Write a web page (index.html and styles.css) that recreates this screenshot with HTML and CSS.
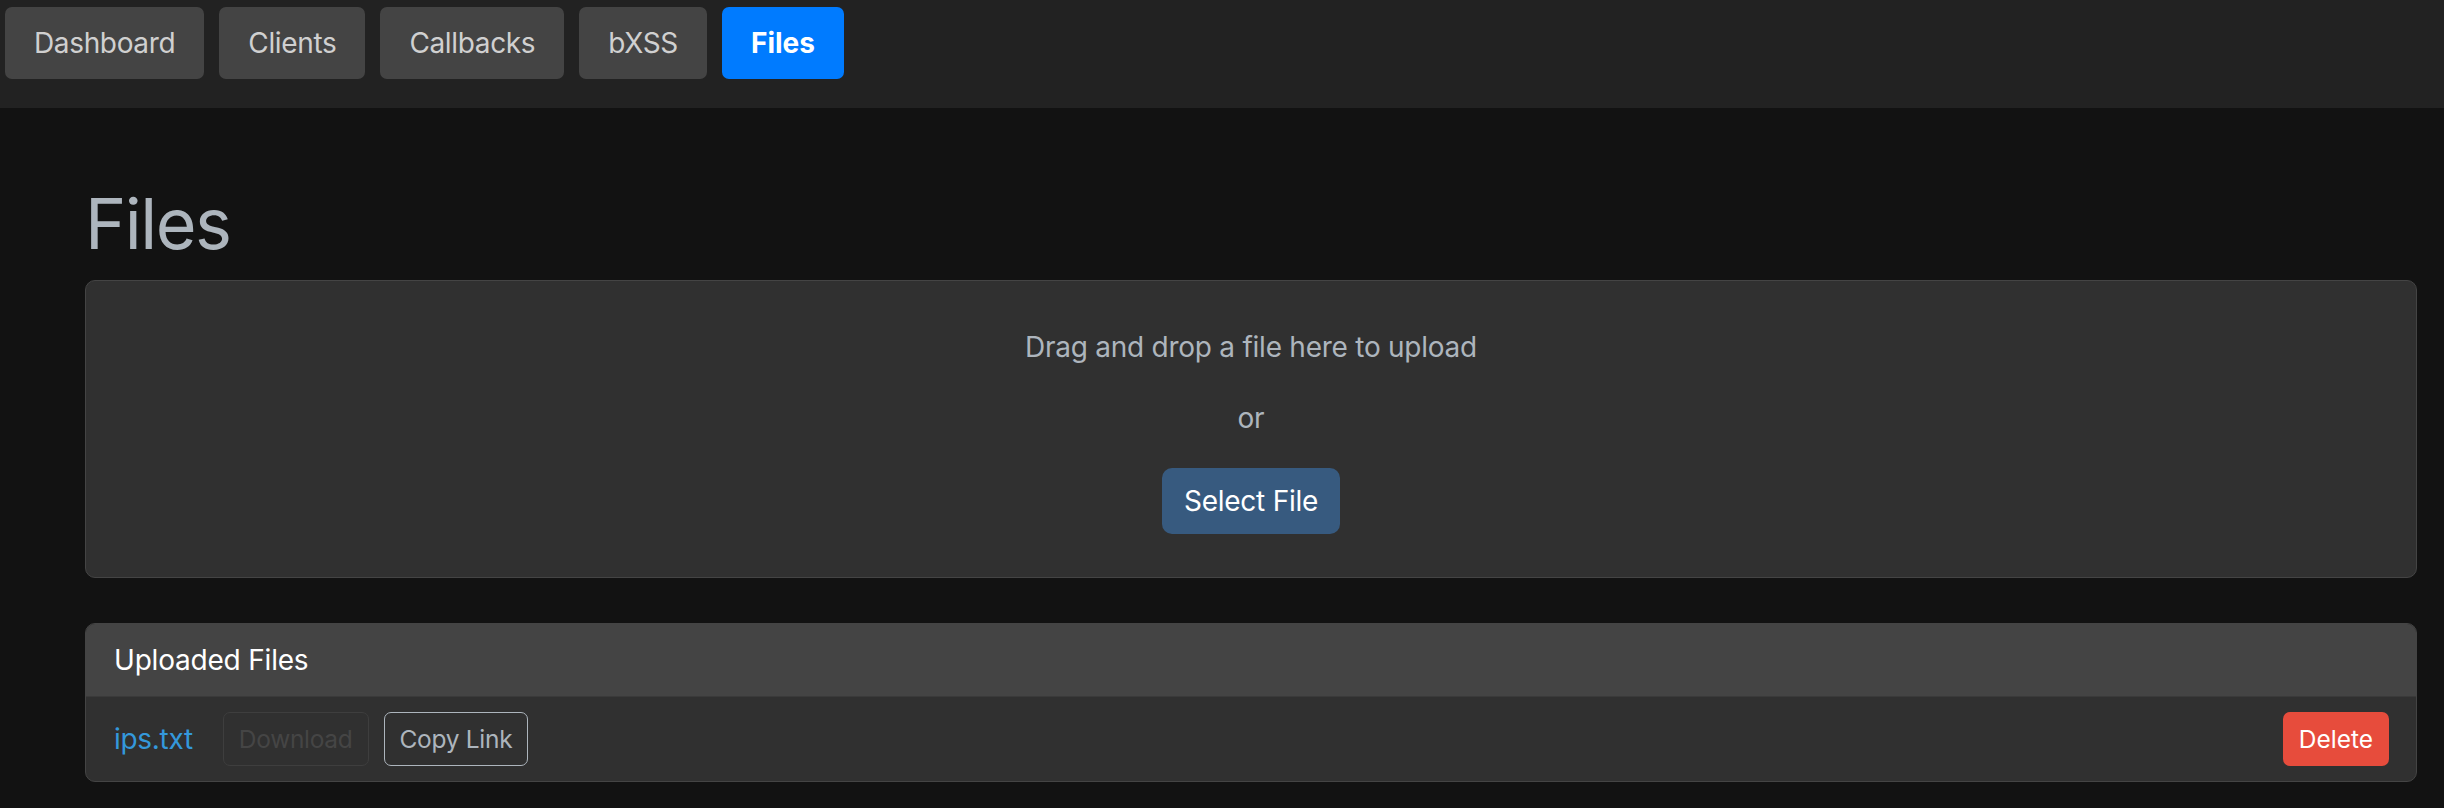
FILE: index.html
```html
<!DOCTYPE html>
<html lang="en">
<head>
<meta charset="utf-8">
<title>Files</title>
<link rel="stylesheet" href="styles.css">
</head>
<body>
<nav class="topnav">
  <a class="navbtn" href="#">Dashboard</a>
  <a class="navbtn" href="#">Clients</a>
  <a class="navbtn" href="#">Callbacks</a>
  <a class="navbtn" href="#">bXSS</a>
  <a class="navbtn active" href="#">Files</a>
</nav>
<main class="main">
  <h1 class="title">Files</h1>
  <section class="card dropzone">
    <p class="dz-text">Drag and drop a file here to upload</p>
    <p class="dz-text">or</p>
    <button class="btn btn-primary">Select File</button>
  </section>
  <section class="card files">
    <div class="card-header">Uploaded Files</div>
    <div class="file-row">
      <div class="file-left">
        <a class="file-link" href="#">ips.txt</a>
        <button class="btn btn-sm btn-disabled" disabled>Download</button>
        <button class="btn btn-sm btn-outline">Copy Link</button>
      </div>
      <button class="btn btn-sm btn-danger">Delete</button>
    </div>
  </section>
</main>
</body>
</html>
```

FILE: styles.css
```css
* { box-sizing: border-box; }
html, body {
  margin: 0;
  padding: 0;
  background: #121212;
  font-family: Inter, "Noto Sans", "Liberation Sans", sans-serif;
  font-size: 28px;
  line-height: 1.5;
  color: #adb5bd;
}
.topnav {
  display: flex;
  gap: 15px;
  height: 108px;
  padding: 7px 5px 0;
  background: #222222;
}
.navbtn {
  display: flex;
  align-items: center;
  height: 72px;
  padding: 0 29px;
  background: #444444;
  color: #d0d0d0;
  text-decoration: none;
  border-radius: 7px;
  font-size: 28px;
  letter-spacing: -0.35px;
}
.navbtn.active {
  background: #007bff;
  color: #ffffff;
  font-weight: 700;
  letter-spacing: 0;
}
.main {
  padding: 74px 27px 0 85px;
}
.title {
  margin: 0 0 14px;
  font-size: 70px;
  font-weight: 400;
  letter-spacing: -1.5px;
  line-height: 1.2;
  color: #adb5bd;
}
.card {
  background: #303030;
  border: 1px solid #444444;
  border-radius: 10px;
  overflow: hidden;
}
.dropzone {
  display: flex;
  flex-direction: column;
  align-items: center;
  padding: 45px 0 42px;
  height: 298px;
}
.dz-text {
  margin: 0 0 29px;
  color: #adb5bd;
  letter-spacing: -0.25px;
}
.btn {
  font-family: inherit;
  font-size: 28px;
  line-height: 1.5;
  border: 1px solid transparent;
  border-radius: 10px;
  padding: 11px 21px;
  cursor: pointer;
}
.btn-primary {
  background: #375a7f;
  color: #ffffff;
  letter-spacing: -0.25px;
}
.files {
  margin-top: 45px;
}
.card-header {
  background: #444444;
  color: #ffffff;
  height: 73px;
  padding: 0 28px;
  display: flex;
  align-items: center;
  border-bottom: 1px solid #3a3a3a;
  letter-spacing: -0.2px;
}
.file-row {
  display: flex;
  align-items: center;
  justify-content: space-between;
  padding: 15px 27px 15px 28px;
}
.file-left {
  display: flex;
  align-items: center;
  gap: 15px;
}
.file-link {
  color: #3498db;
  text-decoration: none;
  margin-right: 15px;
  letter-spacing: -0.3px;
}
.btn-sm {
  font-size: 24.5px;
  line-height: 1.5;
  padding: 7px 15px;
  border-radius: 7px;
  height: 54px;
  letter-spacing: -0.3px;
}
.btn-disabled {
  background: transparent;
  border-color: #3e3e3e;
  color: #454545;
  cursor: default;
}
.btn-outline {
  background: transparent;
  border-color: #adb5bd;
  color: #adb5bd;
}
.btn-danger {
  background: #e74c3c;
  color: #ffffff;
  letter-spacing: 0;
}
```
